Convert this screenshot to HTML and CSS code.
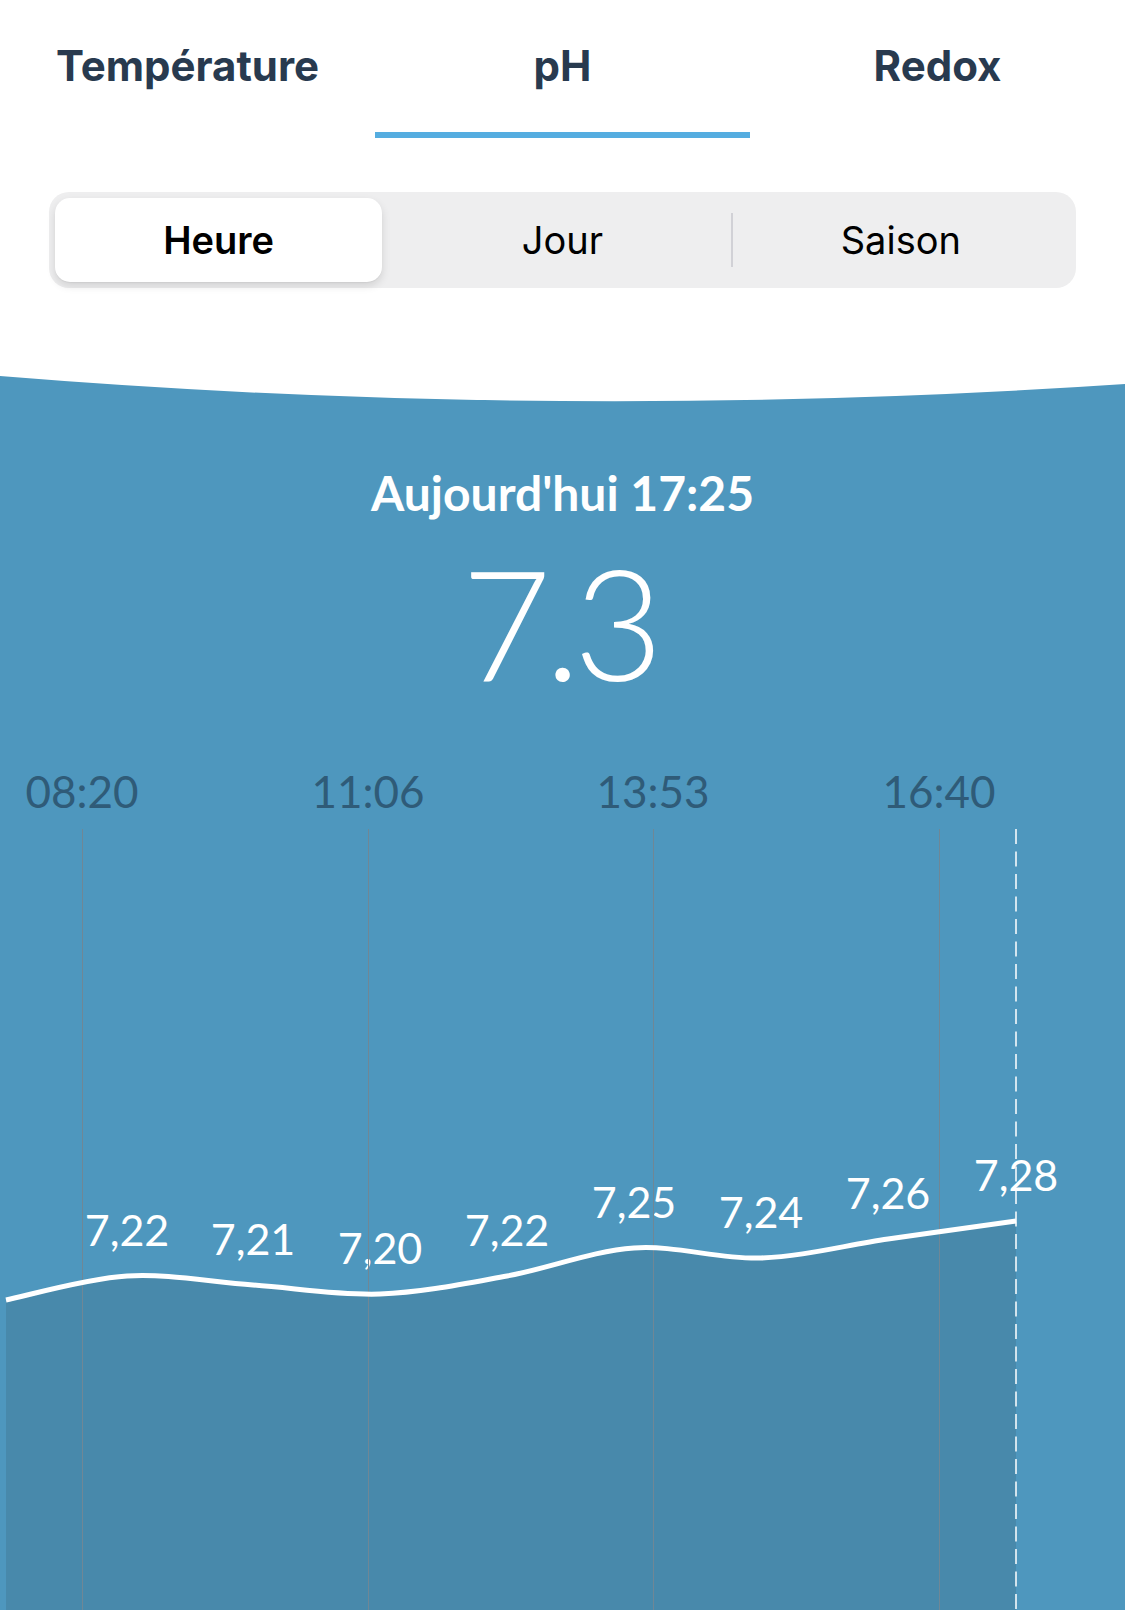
FILE: index.html
```html
<!DOCTYPE html>
<html lang="fr">
  <head>
    <meta charset="UTF-8" />
    <meta name="viewport" content="width=device-width, initial-scale=1.0" />
    <title>pH</title>
    <link rel="stylesheet" href="styles.css">
  </head>
  <body>
    <nav class="tabs">
      <div class="tab">Température</div>
      <div class="tab active">pH</div>
      <div class="tab">Redox</div>
    </nav>

    <div class="segments">
      <div class="segment active">Heure</div>
      <div class="segment">Jour</div>
      <div class="segment divided">Saison</div>
    </div>

    <section class="panel">
      <svg class="wave" viewBox="0 0 1125 30" preserveAspectRatio="none">
        <path d="M0 0 H1125 V8 Q560 46 0 0 Z" fill="#fff" />
      </svg>

      <div class="reading">
        <div class="reading-date">Aujourd'hui 17:25</div>
        <div class="reading-value">7.3</div>
      </div>

      <svg class="chart" viewBox="0 0 1125 870">
        <g class="times">
          <text x="82" y="68">08:20</text>
          <text x="368" y="68">11:06</text>
          <text x="653" y="68">13:53</text>
          <text x="939" y="68">16:40</text>
        </g>

        <path class="area"
          d="M6 560 C26.2 556 85.8 538.5 127 536 C168.2 533.5 210.8 542 253 545 C295.2 548 337.7 555.5 380 554 C422.3 552.5 464.7 543.7 507 536 C549.3 528.3 591.7 511 634 508 C676.3 505 718.7 519.5 761 518 C803.3 516.5 845.5 505.2 888 499 C930.5 492.8 994.7 484 1016 481 L1016 870 L6 870 Z" />

        <g class="values">
          <text x="127" y="506">7,22</text>
          <text x="253" y="515">7,21</text>
          <text x="380" y="524">7,20</text>
          <text x="507" y="506">7,22</text>
          <text x="634" y="478">7,25</text>
          <text x="761" y="488">7,24</text>
          <text x="888" y="469">7,26</text>
          <text x="1016" y="451">7,28</text>
        </g>

        <g class="grid">
          <line x1="82.5" y1="89" x2="82.5" y2="870" />
          <line x1="368.5" y1="89" x2="368.5" y2="870" />
          <line x1="653.5" y1="89" x2="653.5" y2="870" />
          <line x1="939.5" y1="89" x2="939.5" y2="870" />
        </g>

        <path class="line"
          d="M6 560 C26.2 556 85.8 538.5 127 536 C168.2 533.5 210.8 542 253 545 C295.2 548 337.7 555.5 380 554 C422.3 552.5 464.7 543.7 507 536 C549.3 528.3 591.7 511 634 508 C676.3 505 718.7 519.5 761 518 C803.3 516.5 845.5 505.2 888 499 C930.5 492.8 994.7 484 1016 481" />

        <line class="now" x1="1016" y1="89" x2="1016" y2="870" />
      </svg>
    </section>
  </body>
</html>
```

FILE: styles.css
```css
body {
  margin: 0;
  width: 1125px;
  height: 1610px;
  overflow: hidden;
  background: #fff;
  font-family: Lato, "Liberation Sans", sans-serif;
}

.tabs {
  display: grid;
  grid-template-columns: repeat(3, 1fr);
}

.tab {
  padding: 42px 0 42px;
  border-bottom: 6px solid transparent;
  text-align: center;
  font-family: Inter, "Liberation Sans", sans-serif;
  font-size: 42px;
  line-height: 48px;
  font-weight: 700;
  color: #283a4f;
}

.tab.active {
  border-bottom-color: #55ade0;
}

.segments {
  margin: 54px 49px 0;
  padding: 6px;
  display: grid;
  grid-template-columns: repeat(3, 1fr);
  height: 84px;
  background: #eeeeef;
  border-radius: 20px;
  font-family: Inter, "Liberation Sans", sans-serif;
  font-size: 38px;
  color: #000;
}

.segment {
  position: relative;
  display: flex;
  align-items: center;
  justify-content: center;
}

.segment.active {
  margin-right: 11px;
  background: #fff;
  border-radius: 15px;
  font-weight: 600;
  box-shadow: 0 4px 8px rgba(0, 0, 0, 0.12), 0 1px 1px rgba(0, 0, 0, 0.04);
}

.segment.divided::before {
  content: "";
  position: absolute;
  left: -1px;
  top: 15px;
  bottom: 15px;
  width: 2px;
  background: #d1d1d6;
}

.panel {
  margin-top: 88px;
  background: #4e97be;
}

.wave {
  display: block;
  width: 1125px;
  height: 30px;
}

.reading {
  text-align: center;
  color: #fff;
}

.reading-date {
  margin-top: 58px;
  font-size: 48px;
  line-height: 58px;
  font-weight: 700;
}

.reading-value {
  margin-top: 22px;
  font-size: 155px;
  line-height: 155px;
  font-weight: 300;
  letter-spacing: -7px;
  text-indent: -7px;
}

.chart {
  display: block;
  margin-top: 41px;
  width: 1125px;
  height: 870px;
}

.times text {
  font-size: 44px;
  fill: #2f5b78;
  text-anchor: middle;
}

.values text {
  font-size: 43px;
  fill: #fff;
  text-anchor: middle;
}

.area {
  fill: #4889ab;
}

.grid line {
  stroke: #6f8796;
  stroke-width: 1;
}

.line {
  fill: none;
  stroke: #fff;
  stroke-width: 5;
}

.now {
  stroke: #fff;
  stroke-width: 1.5;
  stroke-dasharray: 15 7.5;
}
```
